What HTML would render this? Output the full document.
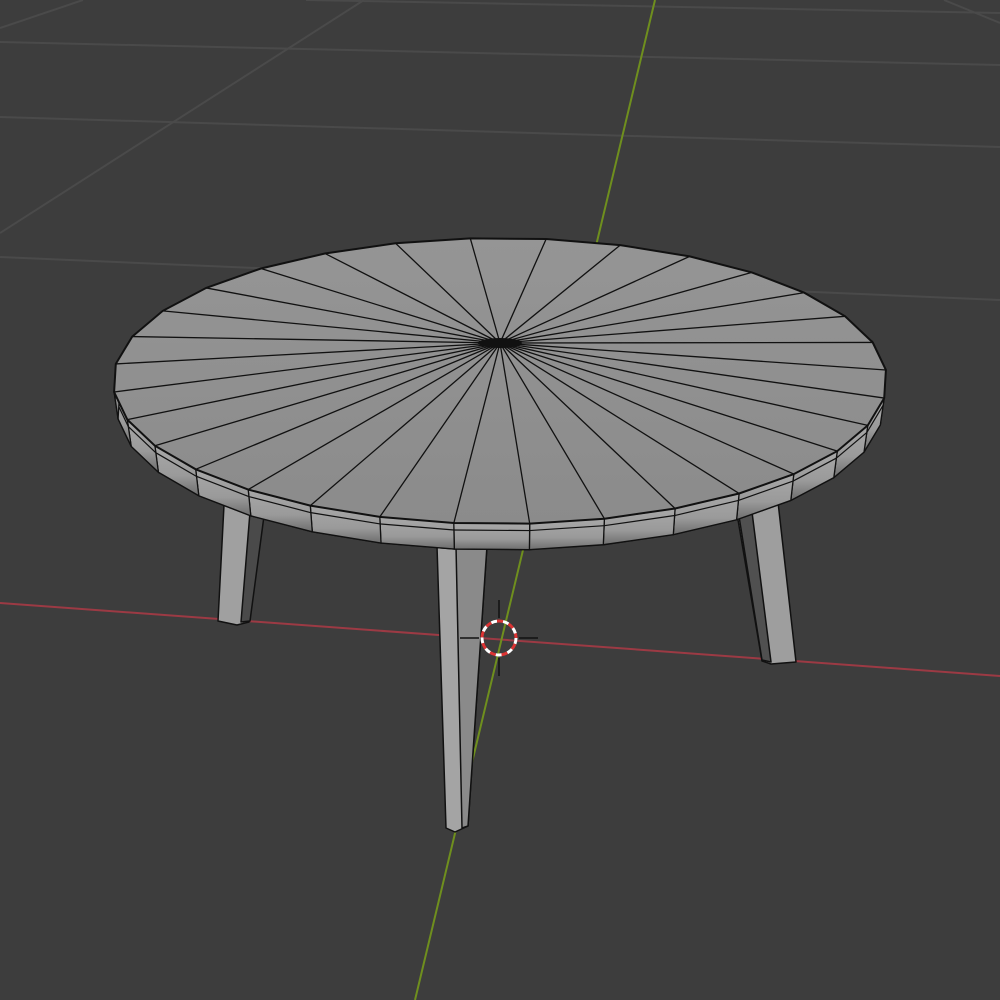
<!DOCTYPE html>
<html><head><meta charset="utf-8"><style>
html,body{margin:0;padding:0;background:#3d3d3d;width:1000px;height:1000px;overflow:hidden}
svg{display:block}
</style></head><body>
<svg id="s" width="1000" height="1000" viewBox="0 0 1000 1000" xmlns="http://www.w3.org/2000/svg">
<defs>
<linearGradient id="gtop" x1="0" y1="0" x2="0" y2="1">
<stop offset="0" stop-color="#959595"/><stop offset="1" stop-color="#8b8b8b"/></linearGradient>
<linearGradient id="grim" x1="0" y1="0" x2="0" y2="1">
<stop offset="0" stop-color="#a8a8a8"/><stop offset="0.6" stop-color="#9a9a9a"/><stop offset="1" stop-color="#6e6e6e"/></linearGradient>
</defs>
<rect width="1000" height="1000" fill="#3d3d3d"/>
<g stroke="#4a4a4a" stroke-width="2" fill="none">
<line x1="306" y1="0" x2="1000" y2="13"/>
<line x1="0" y1="42" x2="1000" y2="65"/>
<line x1="0" y1="117" x2="1000" y2="147"/>
<line x1="0" y1="257" x2="1000" y2="300"/>
<line x1="83" y1="0" x2="0" y2="28"/>
<line x1="364" y1="0" x2="0" y2="233"/>
<line x1="944" y1="0" x2="1000" y2="23"/>
</g>
<line x1="0" y1="603" x2="1000" y2="676" stroke="#9c3a44" stroke-width="2"/>
<line x1="655" y1="0" x2="415" y2="1000" stroke="#6f8f1e" stroke-width="2"/>
<g stroke="#111" stroke-width="1.5" stroke-linejoin="round">
<polygon points="224,505 262,515 249,622 237,625 218,621" fill="#a0a0a0"/>
<polygon points="250,512 264,516 250,621 241,622" fill="#4a4a4a"/>
<polygon points="736,508 778,502 796,662 771,664 762,661" fill="#9e9e9e"/>
<polygon points="738,510 752,512 771,662 762,660" fill="#505050"/>
<polygon points="437,546 487,546 468,826 455,832 446,828" fill="#a4a4a4"/>
<polygon points="456,546 487,546 468,826 462,828" fill="#8a8a8a"/>
</g>
<g id="table"></g>
<g>
<circle cx="499" cy="638" r="17" fill="none" stroke="#fff" stroke-width="3" stroke-dasharray="6 6"/>
<circle cx="499" cy="638" r="17" fill="none" stroke="#d33" stroke-width="3" stroke-dasharray="6 6" stroke-dashoffset="6"/>
<g stroke="#111" stroke-width="1.5">
<line x1="460" y1="638" x2="479" y2="638"/><line x1="519" y1="638" x2="538" y2="638"/>
<line x1="499" y1="600" x2="499" y2="618"/><line x1="499" y1="658" x2="499" y2="676"/>
</g>
</g>
</svg>
<script>
(function(){
var g=document.getElementById('table');var ns='http://www.w3.org/2000/svg';
function el(t,a){var e=document.createElementNS(ns,t);for(var k in a)e.setAttribute(k,a[k]);g.appendChild(e);return e;}
var N=32,st=11.25,off=-94.4,cx=500,cy=381,rx=387,ry=143,hx=500,hy=343;
var tp=[],bt=[],md=[];
for(var k=0;k<N;k++){var t=(off+st*k)*Math.PI/180;
tp.push([cx+rx*Math.cos(t),cy+ry*Math.sin(t)]);
bt.push([cx+383*Math.cos(t),408+142*Math.sin(t)]);
md.push([cx+386*Math.cos(t),388+143*Math.sin(t)]);}
function pts(a){return a.map(function(p){return p[0].toFixed(1)+','+p[1].toFixed(1)}).join(' ');}
el('polygon',{points:pts(bt),fill:'#707070',stroke:'#111','stroke-width':1.5});
for(var k=0;k<N;k++){var j=(k+1)%N;
if(Math.sin((off+st*k+st/2)*Math.PI/180)>-0.2){
el('polygon',{points:pts([tp[k],tp[j],bt[j],bt[k]]),fill:'url(#grim)',stroke:'#111','stroke-width':1.3});
el('line',{x1:md[k][0],y1:md[k][1],x2:md[j][0],y2:md[j][1],stroke:'#111','stroke-width':1.2});
}}
el('polygon',{points:pts(tp),fill:'url(#gtop)',stroke:'#111','stroke-width':2});
for(var k=0;k<N;k++)el('line',{x1:hx,y1:hy,x2:tp[k][0],y2:tp[k][1],stroke:'#111','stroke-width':1.3});
el('ellipse',{cx:hx,cy:hy,rx:22,ry:5,fill:'#111'});
})();
</script>
</body></html>
